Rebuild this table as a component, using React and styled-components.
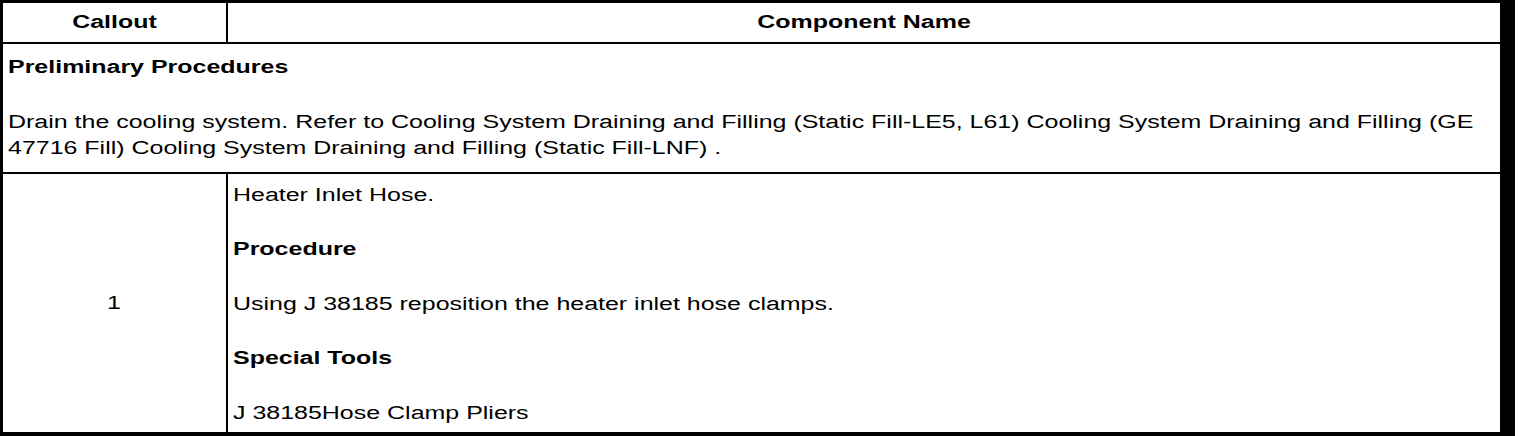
import React from 'react';
import styled, { createGlobalStyle } from 'styled-components';

// the source page renders its text noticeably wide, so glyphs are stretched
const STRETCH = 1.387;

const GlobalStyle = createGlobalStyle`
  html, body {
    margin: 0;
    padding: 0;
    background: #fff;
  }
  body {
    font-family: 'Liberation Sans', Arial, sans-serif;
    color: #000;
  }
`;

const Frame = styled.div`
  width: 1515px;
  box-sizing: border-box;
  border-style: solid;
  border-color: #000;
  border-width: 3px 15px 4px 3px;
  font-size: 18px;
`;

const Row = styled.div`
  display: flex;
  height: ${p => p.h}px;
  border-bottom: ${p => (p.last ? 0 : 2)}px solid #000;
`;

const HeadCell = styled.div`
  flex: ${p => (p.narrow ? '0 0 223px' : '1 1 auto')};
  border-right: ${p => (p.narrow ? '2px solid #000' : 'none')};
  display: flex;
  align-items: center;
  justify-content: center;
  font-weight: 700;
`;

const CalloutCell = styled.div`
  flex: 0 0 223px;
  border-right: 2px solid #000;
  display: flex;
  align-items: center;
  justify-content: center;
`;

const Label = styled.span`
  display: inline-block;
  transform: scaleX(${STRETCH});
  transform-origin: center;
`;

const Cell = styled.div`
  flex: 1 1 auto;
  min-width: 0;
  padding: ${p => p.pad};
`;

const Stretch = styled.div`
  width: calc(100% / ${STRETCH});
  transform: scaleX(${STRETCH});
  transform-origin: 0 0;
`;

const Para = styled.p`
  margin: 0 0 28.5px;
  line-height: 26px;
  font-weight: ${p => (p.bold ? 700 : 400)};
  &:last-child {
    margin-bottom: 0;
  }
`;

export default function App() {
  return (
    <>
      <GlobalStyle />
      <Frame>
        <Row h={39}>
          <HeadCell narrow>
            <Label>Callout</Label>
          </HeadCell>
          <HeadCell>
            <Label>Component Name</Label>
          </HeadCell>
        </Row>
        <Row h={128}>
          <Cell pad="10px 5px 12px">
            <Stretch>
              <Para bold>Preliminary Procedures</Para>
              <Para>
                Drain the cooling system. Refer to Cooling System Draining and Filling (Static Fill-LE5, L61) Cooling
                System Draining and Filling (GE 47716 Fill) Cooling System Draining and Filling (Static Fill-LNF) .
              </Para>
            </Stretch>
          </Cell>
        </Row>
        <Row h={258} last>
          <CalloutCell>
            <Label>1</Label>
          </CalloutCell>
          <Cell pad="7.5px 5px 6px">
            <Stretch>
              <Para>Heater Inlet Hose.</Para>
              <Para bold>Procedure</Para>
              <Para>Using J 38185 reposition the heater inlet hose clamps.</Para>
              <Para bold>Special Tools</Para>
              <Para>J 38185Hose Clamp Pliers</Para>
            </Stretch>
          </Cell>
        </Row>
      </Frame>
    </>
  );
}
